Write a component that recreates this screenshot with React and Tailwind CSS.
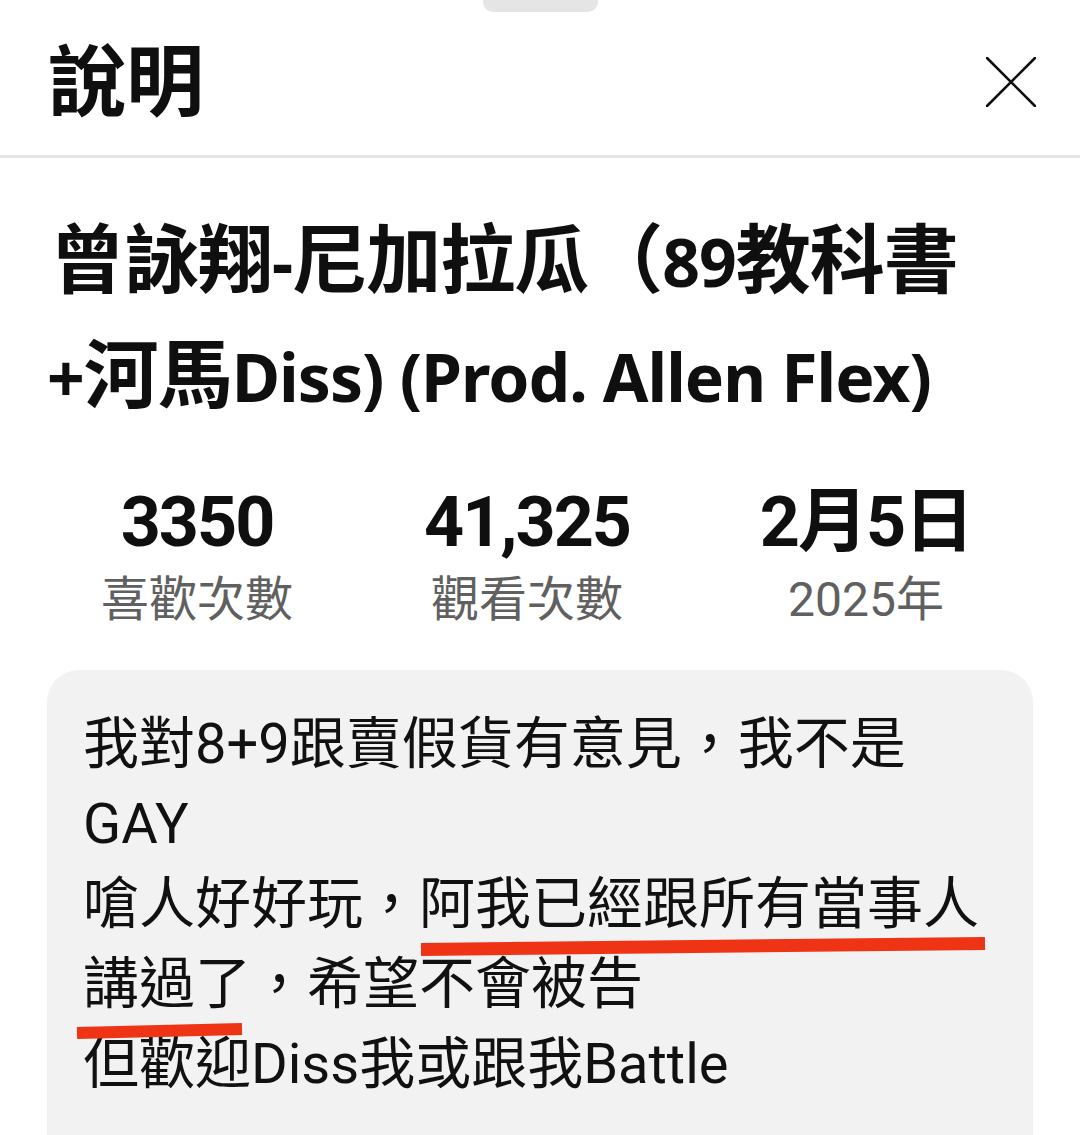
const cjk = "font-['Noto_Sans','Noto_Sans_CJK_TC',sans-serif]";
const body = "font-['Roboto','Noto_Sans_CJK_TC',sans-serif]";

const stats = [
  { value: "3350", label: "喜歡次數" },
  { value: "41,325", label: "觀看次數" },
  { value: "2月5日", label: "2025年" },
];

// CJK runs in the title are set a little larger than the latin text
const Han = ({ children }) => <span className="text-[75px]">{children}</span>;

export default function App() {
  return (
    <div className="relative w-[1080px] h-[1135px] overflow-hidden bg-white text-[#0f0f0f]">
      {/* drag handle */}
      <div className="flex justify-center">
        <div className="-mt-[8px] h-[20px] w-[115px] rounded-full bg-[#e5e5e5]" />
      </div>

      {/* sheet header */}
      <div className="flex h-[143px] items-center justify-between pl-[48px] pr-[44px] pb-[8px]">
        <h1 className={`${cjk} text-[78px] font-bold leading-none`}>說明</h1>
        <svg width="50" height="50" viewBox="0 0 50 50" className="mt-[4px]">
          <path d="M1 1 L49 49 M49 1 L1 49" stroke="#0f0f0f" strokeWidth="2.6" strokeLinecap="round" />
        </svg>
      </div>
      <div className="h-[3px] bg-[#e5e5e5]" />

      {/* video title */}
      <div className={`${cjk} px-[50px] pt-[44px] text-[66px] font-bold leading-[112px] tracking-[-1px]`}>
        <div className="whitespace-nowrap">
          <Han>曾詠翔</Han>-<Han>尼加拉瓜（</Han>89<Han>教科書</Han>
        </div>
        <div className="-ml-[3px] whitespace-nowrap">
          +<Han>河馬</Han>Diss) (Prod. Allen Flex)
        </div>
      </div>

      {/* stats */}
      <div className="mt-[50px] grid grid-cols-[330px_330px_348px] pl-[32px]">
        {stats.map((s) => (
          <div key={s.label} className="flex flex-col items-center">
            <span className={`${body} text-[70px] font-bold leading-[80px] tracking-[-2px]`}>{s.value}</span>
            <span className={`${body} mt-[8px] text-[48px] leading-[60px] text-[#606060]`}>{s.label}</span>
          </div>
        ))}
      </div>

      {/* description */}
      <div className="relative mx-[47px] mt-[40px] h-[500px] rounded-[32px] bg-[#f2f2f2] px-[36px] pt-[34px]">
        <div className={`${body} text-[56px] leading-[80px] text-[#111]`}>
          <div className="whitespace-nowrap">我對8+9跟賣假貨有意見，我不是</div>
          <div className="whitespace-nowrap">GAY</div>
          <div className="whitespace-nowrap">嗆人好好玩，阿我已經跟所有當事人</div>
          <div className="whitespace-nowrap">講過了，希望不會被告</div>
          <div className="whitespace-nowrap">但歡迎Diss我或跟我Battle</div>
        </div>
      </div>

      {/* red marker underlines drawn over the text */}
      <svg className="pointer-events-none absolute left-0 top-0" width="1080" height="1135">
        <path d="M421 949.5 L985 943.5" stroke="#ef3415" strokeWidth="13" />
        <path d="M77 1033 L242 1029" stroke="#ef3415" strokeWidth="12" />
      </svg>
    </div>
  );
}
